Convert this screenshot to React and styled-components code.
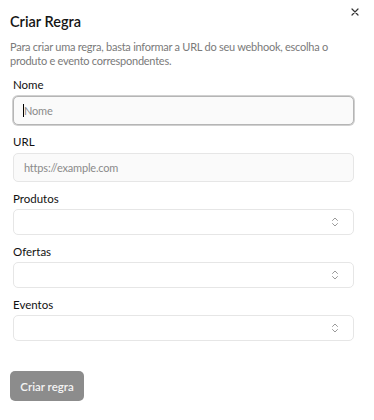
import React from "react";
import styled, { createGlobalStyle } from "styled-components";

const Global = createGlobalStyle`
  html, body { margin: 0; padding: 0; background: #fff; }
  body { font-family: Lato, "Noto Sans", sans-serif; color: #1a1a1a; }
  * { box-sizing: border-box; }
`;

const Dialog = styled.div`
  position: relative;
  width: 374px;
  height: 420px;
  padding: 12px 10px 0 10px;
  background: #fff;
`;

const Close = styled.button`
  position: absolute;
  top: 5px;
  right: 12px;
  width: 14px;
  height: 14px;
  padding: 0;
  border: 0;
  background: none;
  color: #333;
  display: flex;
  align-items: center;
  justify-content: center;
`;

const Title = styled.h2`
  margin: 0;
  font-size: 14.5px;
  line-height: 20px;
  font-weight: 600;
  color: #151515;
`;

const Description = styled.p`
  margin: 8px 0 0;
  max-width: 345px;
  font-size: 11px;
  line-height: 14px;
  letter-spacing: -0.25px;
  color: #7a7a7a;
`;

const Form = styled.form`
  display: flex;
  flex-direction: column;
  gap: 9px;
  margin-top: 9px;
  padding: 0 10px 0 3px;
`;

const Field = styled.div`
  display: flex;
  flex-direction: column;
  gap: ${(p) => (p.$select ? 2 : 3)}px;
`;

const Label = styled.label`
  font-size: 11.5px;
  line-height: 16px;
  font-weight: 400;
  color: #111;
`;

const InputWrap = styled.div`
  position: relative;
`;

const Input = styled.input`
  display: block;
  width: 100%;
  height: 29px;
  padding: 0 10px;
  font-family: inherit;
  font-size: 11px;
  letter-spacing: -0.2px;
  color: #222;
  background: #fafafa;
  border: 1px solid ${(p) => (p.$focused ? "#b5b5b5" : "#e6e6e6")};
  border-radius: 5px;
  outline: none;
  caret-color: transparent;
  box-shadow: ${(p) => (p.$focused ? "0 0 0 1px #d0d0d0" : "none")};
  &::placeholder { color: #8a8a8a; }
`;

const Caret = styled.span`
  position: absolute;
  left: 10px;
  top: 8px;
  width: 1px;
  height: 13px;
  background: #000;
`;

const Select = styled.button`
  display: flex;
  align-items: center;
  justify-content: flex-end;
  width: 100%;
  height: 26px;
  padding: 0 14px 0 10px;
  background: #fff;
  border: 1px solid #e6e6e6;
  border-radius: 5px;
  color: #9a9a9a;
`;

const Submit = styled.button`
  margin-top: 30px;
  width: 74px;
  height: 30px;
  border: 0;
  border-radius: 5px;
  background: #8c8c8c;
  color: #f4f4f4;
  font-family: inherit;
  font-size: 11.5px;
  font-weight: 600;
`;

const UpDown = () => (
  <svg width="8" height="10" viewBox="0 0 8 10" fill="none" stroke="currentColor" strokeWidth="1" strokeLinecap="round" strokeLinejoin="round">
    <path d="M1.5 3.5 L4 1 L6.5 3.5" />
    <path d="M1.5 6.5 L4 9 L6.5 6.5" />
  </svg>
);

const SelectField = ({ label }) => (
  <Field $select>
    <Label>{label}</Label>
    <Select type="button">
      <UpDown />
    </Select>
  </Field>
);

export default function App() {
  return (
    <>
      <Global />
      <Dialog>
        <Close aria-label="Fechar">
          <svg width="8" height="8" viewBox="0 0 8 8" stroke="currentColor" strokeWidth="1.2" strokeLinecap="round">
            <path d="M1 1 L7 7 M7 1 L1 7" />
          </svg>
        </Close>
        <Title>Criar Regra</Title>
        <Description>
          Para criar uma regra, basta informar a URL do seu webhook, escolha o produto e evento correspondentes.
        </Description>
        <Form>
          <Field>
            <Label>Nome</Label>
            <InputWrap>
              <Input $focused placeholder="Nome" />
              <Caret />
            </InputWrap>
          </Field>
          <Field>
            <Label>URL</Label>
            <Input placeholder="https://example.com" />
          </Field>
          <SelectField label="Produtos" />
          <SelectField label="Ofertas" />
          <SelectField label="Eventos" />
        </Form>
        <Submit type="button">Criar regra</Submit>
      </Dialog>
    </>
  );
}
